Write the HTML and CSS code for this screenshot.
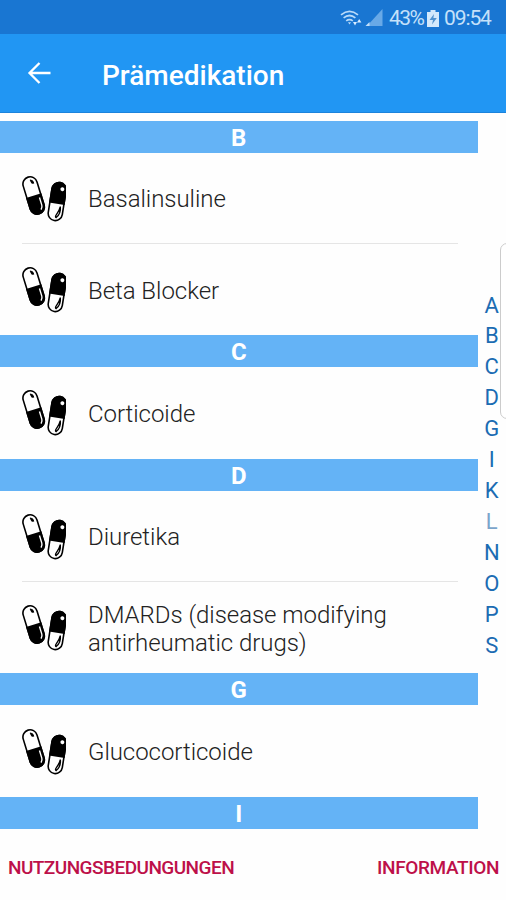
FILE: index.html
```html
<!DOCTYPE html>
<html lang="de">
<head>
<meta charset="utf-8">
<title>Prämedikation</title>
<link rel="stylesheet" href="styles.css">
</head>
<body>
<svg class="defs" width="0" height="0" aria-hidden="true">
  <symbol id="pills" viewBox="0 0 44 48">
    <g transform="rotate(-17 12 21)">
      <rect x="4.600" y="1.200" width="14.400" height="38.400" rx="7.200" fill="#fff" stroke="#000" stroke-width="1.600"/>
      <path d="M3.800 20.500H19.800V32.400a8 8 0 0 1-16 0Z" fill="#000"/>
      <path d="M13 4.500q2.800.8 2.600 4.200l-2-.6z" fill="#000" stroke="#000" stroke-width=".8"/>
      <path d="M16.800 24v8q0 2.200-2 4" fill="none" stroke="#fff" stroke-width="1.400"/>
    </g>
    <g transform="rotate(9 35 27)">
      <rect x="28" y="7.300" width="14.200" height="38.400" rx="7.100" fill="#fff" stroke="#000" stroke-width="1.600"/>
      <path d="M27.200 28.800V14.400a7.900 7.900 0 0 1 15.800 0V28.800Z" fill="#000"/>
      <circle cx="38.300" cy="13.500" r="2" fill="#fff"/>
      <path d="M39 31q1.800 7-2.400 11.500q-1.600-.5 0-3.500q2-3.500 2.400-8z" fill="#fff" stroke="#000" stroke-width="1.400"/>
    </g>
  </symbol>
</svg>
<div class="status">
  <svg class="wifi" viewBox="0 0 24 18" width="24" height="18" fill="none" stroke="#b9dbfa" stroke-width="1.700">
    <path d="M1 5.800q8.500-7 17 0M3.600 8.900q5.900-4.800 11.800 0M6.200 11.900q3.300-2.500 6.600 0"/>
    <path d="M8 13.200h3l-1.500 2.300z" fill="#b9dbfa" stroke="none"/>
    <path d="M13 13h4l-2 3.500zM17 13.500l2.200-3.500 2.200 3.500z" fill="#d8ecff" stroke="none"/>
  </svg>
  <svg class="signal" viewBox="0 0 18 18" width="18" height="18"><path d="M17.500 0V17H2Z" fill="#68a9e7"/><path d="M4.500 13V17H.5Z" fill="#c3e0fa"/></svg>
  <span class="percent">43%</span>
  <svg class="battery" viewBox="0 0 12 17" width="12" height="17"><path d="M3.500 0h5v2H12v15H0V2h3.500z" fill="#d3e9fc"/><path d="M7 4 2.500 10H6l-1 4.500L9.800 8H6.400z" fill="#5293cf"/></svg>
  <span class="clock">09:54</span>
</div>
<header class="appbar">
  <svg class="back" viewBox="0 0 24 24" width="24" height="24" fill="none" stroke="#fff" stroke-width="2.300"><path d="M23.500 12H2.500M12.500 2 2.500 12 12.500 22"/></svg>
  <h1>Prämedikation</h1>
</header>
<div class="content">
  <main class="list">
    <h2>B</h2>
    <div class="row divided"><svg class="pills"><use href="#pills"/></svg><span>Basalinsuline</span></div>
    <div class="row"><svg class="pills"><use href="#pills"/></svg><span>Beta Blocker</span></div>
    <h2>C</h2>
    <div class="row"><svg class="pills"><use href="#pills"/></svg><span>Corticoide</span></div>
    <h2>D</h2>
    <div class="row divided"><svg class="pills"><use href="#pills"/></svg><span>Diuretika</span></div>
    <div class="row"><svg class="pills"><use href="#pills"/></svg><span>DMARDs (disease modifying<br>antirheumatic drugs)</span></div>
    <h2>G</h2>
    <div class="row"><svg class="pills"><use href="#pills"/></svg><span>Glucocorticoide</span></div>
    <h2>I</h2>
  </main>
  <nav class="index">
    <a>A</a><a>B</a><a>C</a><a>D</a><a>G</a><a>I</a><a>K</a><a class="soft">L</a><a>N</a><a>O</a><a>P</a><a>S</a>
  </nav>
</div>
<footer><a class="terms">NUTZUNGSBEDUNGUNGEN</a><a class="info">INFORMATION</a></footer>
<div class="edge-handle"></div>
</body>
</html>
```
FILE: styles.css
```css
* { box-sizing: border-box; }
body {
  margin: 0;
  width: 506px;
  height: 900px;
  overflow: hidden;
  position: relative;
  background: #fefefe;
  font-family: Roboto, sans-serif;
}
.defs { position: absolute; }
.status {
  height: 34px;
  background: #1976d2;
  color: #c5e1fa;
  display: flex;
  align-items: center;
  justify-content: flex-end;
  padding: 2px 14px 0 0;
  font-size: 21px;
}
.wifi { margin-right: 1px; }
.signal { margin: 0 6px 0 0; }
.percent { width: 35px; white-space: nowrap; letter-spacing: -1.6px; }
.battery { margin: 0 5px 0 3px; }
.clock { width: 48px; white-space: nowrap; letter-spacing: -1.1px; }
.appbar {
  height: 79px;
  background: #2196f3;
  border-bottom: 1px solid #1b83dc;
  display: flex;
  align-items: center;
  padding-left: 27px;
}
.back { margin-right: 51px; }
.appbar h1 {
  margin: 4px 0 0;
  color: #fff;
  font-size: 28px;
  font-weight: 500;
  white-space: nowrap;
}
.content { display: flex; height: 716px; padding-top: 7.5px; }
.list { width: 477.5px; }
.list h2 {
  margin: 0;
  height: 32px;
  line-height: 35px;
  background: #64b3f6;
  color: #fff;
  font-size: 24px;
  font-weight: 700;
  text-align: center;
}
.row {
  position: relative;
  height: 91.4px;
  display: flex;
  align-items: center;
  padding: 2px 0 0 22px;
  color: #222;
  font-size: 24px;
  font-weight: 300;
  line-height: 28px;
  letter-spacing: -0.04px;
  white-space: nowrap;
}
.divided::after {
  content: "";
  position: absolute;
  left: 22px;
  right: 20px;
  bottom: 0;
  height: 1px;
  background: #e5e5e5;
}
.pills { width: 44px; height: 48px; flex: none; margin: 0 22px 1px 0; }
.index {
  width: 28.5px;
  padding-top: 169px;
  display: flex;
  flex-direction: column;
  color: #1b6cb3;
  font-size: 22px;
  text-align: center;
}
.index a { height: 30.95px; line-height: 31px; }
.index .soft { color: #7ba5cb; }
footer {
  height: 71px;
  display: flex;
  justify-content: space-between;
  padding: 27px 7px 0 8px;
  color: #bd1049;
  font-size: 19px;
  font-weight: 500;
  line-height: 24px;
}
.terms { letter-spacing: -0.54px; }
.info { letter-spacing: -0.38px; }
.edge-handle {
  position: absolute;
  left: 500px;
  top: 243px;
  width: 20px;
  height: 176px;
  border: 1px solid #ccc;
  border-radius: 7px;
  background: #fff;
}
```
